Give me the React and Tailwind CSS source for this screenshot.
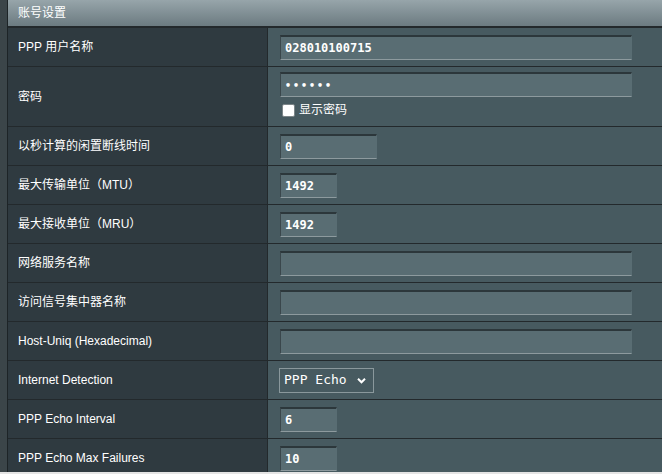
import React from 'react'

const labelFont = { fontFamily: '"Liberation Sans", Arial, "Noto Sans CJK SC", sans-serif' }

function TextBox({ value, width, dots }) {
  return (
    <div
      className={`${width} h-[25px] shrink-0 bg-[#596d73] border border-t-2 border-t-[#2c373b] border-l-[#3a474c] border-b-[#8d9a9e] border-r-[#596d73] flex items-center pl-[4px] text-white font-bold font-['DejaVu_Sans_Mono',monospace] ${dots ? 'text-[10px] tracking-[2px]' : 'text-[12px]'}`}
    >
      {value}
    </div>
  )
}

function Row({ label, children, tall }) {
  return (
    <div className={`flex shrink-0 border-b border-[#23292c] ${tall ? 'h-[60px]' : 'h-[39px]'}`}>
      <div
        className="w-[260px] shrink-0 bg-[#2f3a40] border-r border-[#23292c] flex items-center pl-[10px] text-white text-[12px]"
        style={labelFont}
      >
        {label}
      </div>
      <div className={`flex-1 bg-[#475a60] flex flex-col pl-[12px] ${tall ? 'justify-start pt-[5px]' : 'justify-center'}`}>
        {children}
      </div>
    </div>
  )
}

export default function App() {
  return (
    <div className="w-[662px] h-[474px] bg-[#e4e4e4] overflow-hidden">
      <div className="h-[472px] flex overflow-hidden">
        <div className="w-[7px] bg-[#3b4549] border-r border-[#1d2427] box-content shrink-0" />
        <div className="flex-1 flex flex-col">
          <div
            className="h-[28px] shrink-0 bg-gradient-to-b from-[#97a5aa] to-[#6c7b81] border-b-2 border-[#23292c] flex items-center pl-[10px] text-white text-[12px]"
            style={labelFont}
          >
            账号设置
          </div>
          <Row label="PPP 用户名称">
            <TextBox value="028010100715" width="w-[352px]" />
          </Row>
          <Row label="密码" tall>
            <TextBox value="••••••" width="w-[352px]" dots />
            <div className="flex items-center gap-[4px] mt-[4px] ml-[2px]">
              <div className="w-[13px] h-[13px] bg-white border border-[#7c8588] rounded-[2px]" />
              <span className="text-white text-[12px]" style={labelFont}>显示密码</span>
            </div>
          </Row>
          <Row label="以秒计算的闲置断线时间">
            <TextBox value="0" width="w-[97px]" />
          </Row>
          <Row label="最大传输单位（MTU）">
            <TextBox value="1492" width="w-[57px]" />
          </Row>
          <Row label="最大接收单位（MRU）">
            <TextBox value="1492" width="w-[57px]" />
          </Row>
          <Row label="网络服务名称">
            <TextBox value="" width="w-[352px]" />
          </Row>
          <Row label="访问信号集中器名称">
            <TextBox value="" width="w-[352px]" />
          </Row>
          <Row label="Host-Uniq (Hexadecimal)">
            <TextBox value="" width="w-[352px]" />
          </Row>
          <Row label="Internet Detection">
            <div className="-ml-[1px] w-[95px] h-[25px] border border-[#8a989c] bg-[#475a60] flex items-center justify-between pl-[4px] pr-[7px] text-white text-[13px] font-['DejaVu_Sans_Mono',monospace]">
              <span className="whitespace-pre">PPP Echo</span>
              <svg width="9" height="9" viewBox="0 0 9 9" fill="none">
                <path d="M1 2.8 L4.5 6.3 L8 2.8" stroke="white" strokeWidth="2" />
              </svg>
            </div>
          </Row>
          <Row label="PPP Echo Interval">
            <TextBox value="6" width="w-[57px]" />
          </Row>
          <Row label="PPP Echo Max Failures">
            <TextBox value="10" width="w-[57px]" />
          </Row>
        </div>
      </div>
    </div>
  )
}
